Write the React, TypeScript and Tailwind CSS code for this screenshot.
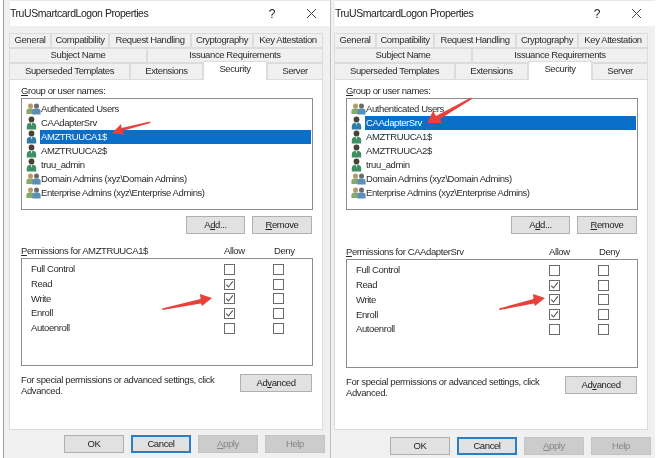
import type { ReactNode } from 'react';

const tabRowOne = [
  ['General', 'w-[42px]'],
  ['Compatibility', 'w-[58px]'],
  ['Request Handling', 'w-[82px]'],
  ['Cryptography', 'w-[62px]'],
  ['Key Attestation', 'w-[70px]'],
];

const tabRowTwo = [
  ['Subject Name', 'w-[138px]'],
  ['Issuance Requirements', 'w-[176px]'],
];

const users = [
  { name: 'Authenticated Users', group: true },
  { name: 'CAAdapterSrv' },
  { name: 'AMZTRUUCA1$' },
  { name: 'AMZTRUUCA2$' },
  { name: 'truu_admin' },
  { name: 'Domain Admins (xyz\\Domain Admins)', group: true },
  { name: 'Enterprise Admins (xyz\\Enterprise Admins)', group: true },
];

const permissions = [
  { name: 'Full Control', allow: false },
  { name: 'Read', allow: true },
  { name: 'Write', allow: true },
  { name: 'Enroll', allow: true },
  { name: 'Autoenroll', allow: false },
];

function Tab({ label, width }: { label: string; width: string }) {
  return (
    <div className={`${width} flex h-full items-center justify-center border border-[#dcdcdc] bg-[#f0f0f0] whitespace-nowrap`}>
      {label}
    </div>
  );
}

function UserIcon({ selected }: { selected: boolean }) {
  const body = selected ? '#2f7ea8' : '#3f8f63';
  return (
    <svg width="11" height="14" viewBox="0 0 11 14" className="shrink-0">
      <circle cx="5.5" cy="3.4" r="2.9" fill="#4a4238" />
      <path d="M0.8 13.5V10c0-2.2 2-3.4 4.7-3.4s4.7 1.2 4.7 3.4v3.5z" fill={body} />
      <path d="M4.6 6.8h1.8l-.9 3z" fill="#dfe8e4" />
    </svg>
  );
}

function GroupIcon() {
  return (
    <svg width="15" height="12" viewBox="0 0 15 12" className="shrink-0">
      <circle cx="4.5" cy="3" r="2.5" fill="#b79a68" />
      <path d="M0.4 11V8c0-1.8 1.8-2.8 4.1-2.8S8.6 6.2 8.6 8v3z" fill="#86a96c" />
      <circle cx="10.5" cy="3" r="2.5" fill="#6f6a66" />
      <path d="M6.4 11.5V8c0-1.8 1.8-2.8 4.1-2.8s4.1 1 4.1 2.8v3.5z" fill="#5b8fb5" />
    </svg>
  );
}

function Check({ checked }: { checked: boolean }) {
  return (
    <div className="flex h-[11px] w-[11px] items-center justify-center border border-[#6b6b6b] bg-white">
      {checked && (
        <svg width="9" height="9" viewBox="0 0 9 9">
          <path d="M1.2 4.6 3.5 7l4.3-5.6" fill="none" stroke="#555555" strokeWidth="1.1" />
        </svg>
      )}
    </div>
  );
}

function Button({ children, width, kind }: { children: ReactNode; width: string; kind?: 'default' | 'disabled' }) {
  const look =
    kind === 'default'
      ? 'border-2 border-[#2a7fc4] bg-[#e1e1e1] text-[#222222]'
      : kind === 'disabled'
        ? 'border border-[#c4c4c4] bg-[#cccccc] text-[#858585]'
        : 'border border-[#b0b0b0] bg-[#e1e1e1] text-[#222222]';
  return <div className={`${width} flex h-[18px] items-center justify-center ${look}`}>{children}</div>;
}

type DialogProps = {
  className: string;
  footerClass: string;
  selected: string;
  permsClass: string;
  rowClass: string;
  gapClass: string;
};

function Dialog({ className, footerClass, selected, permsClass, rowClass, gapClass }: DialogProps) {
  return (
    <div className={`${className} flex h-full flex-col bg-[#f0f0f0]`}>
      <div className="flex h-[26px] shrink-0 items-center border-t border-[#e8e8e8] bg-white pr-[13px] text-[10.5px] tracking-[-0.45px] text-[#222222]">
        <span className="flex-1">TruUSmartcardLogon Properties</span>
        <span className="mr-[31px] text-[12px]">?</span>
        <svg width="11" height="11" viewBox="0 0 11 11">
          <path d="M1 1l9 9M10 1l-9 9" stroke="#444444" strokeWidth="1" />
        </svg>
      </div>

      <div className="-ml-px mt-[7px] w-[314px]">
        <div className="flex h-[15px]">
          {tabRowOne.map(([label, width]) => (
            <Tab key={label} label={label} width={width} />
          ))}
        </div>
        <div className="flex h-[15px]">
          {tabRowTwo.map(([label, width]) => (
            <Tab key={label} label={label} width={width} />
          ))}
        </div>
        <div className="relative z-10 -mb-px flex h-[17px] items-end">
          <Tab label="Superseded Templates" width="w-[121px]" />
          <Tab label="Extensions" width="w-[73px]" />
          <div className="-mt-[2px] flex h-[19px] w-[64px] items-center justify-center border border-b-0 border-[#dcdcdc] bg-white pb-[3px]">
            Security
          </div>
          <Tab label="Server" width="w-[56px]" />
        </div>

        <div className="h-[351px] border border-[#dcdcdc] bg-white pl-[11px] pr-[9px]">
          <div className="pt-[4px] leading-[14px]">
            <u>G</u>roup or user names:
          </div>
          <div className="h-[112px] border border-[#8c8c8c] pt-[3px]">
            {users.map((user) => {
              const isSelected = user.name === selected;
              return (
                <div key={user.name} className="flex h-[14px] items-center pl-[4px]">
                  <div className="flex w-[15px] justify-start">
                    {user.group ? <GroupIcon /> : <UserIcon selected={isSelected} />}
                  </div>
                  <div
                    className={
                      isSelected
                        ? 'ml-[-1px] mr-px flex h-[14px] flex-1 items-center bg-[#0a6fc9] pl-[1px] text-white'
                        : 'pl-0'
                    }
                  >
                    {user.name}
                  </div>
                </div>
              );
            })}
          </div>

          <div className="mt-[6px] flex justify-end gap-[7px] pr-px">
            <Button width="w-[59px]">
              A<u>d</u>d...
            </Button>
            <Button width="w-[60px]">
              <u>R</u>emove
            </Button>
          </div>

          <div className={`${gapClass} flex h-[14px] items-center`}>
            <span className="flex-1">
              <u>P</u>ermissions for {selected}
            </span>
            <span className="w-[50px]">Allow</span>
            <span className="w-[39px]">Deny</span>
          </div>
          <div className={`${permsClass} border border-[#8c8c8c] pt-[3px]`}>
            {permissions.map((perm) => (
              <div key={perm.name} className={`${rowClass} flex items-center pl-[9px]`}>
                <span className="w-[193px]">{perm.name}</span>
                <div className="w-[49px]">
                  <Check checked={perm.allow} />
                </div>
                <Check checked={false} />
              </div>
            ))}
          </div>

          <div className="mt-[8px] flex items-start justify-between pr-px">
            <div className="w-[205px] leading-[11px]">For special permissions or advanced settings, click Advanced.</div>
            <Button width="w-[72px]">
              Ad<u>v</u>anced
            </Button>
          </div>
        </div>
      </div>

      <div className={`${footerClass} flex justify-end gap-[7px]`}>
        <Button width="w-[60px]">OK</Button>
        <Button width="w-[60px]" kind="default">
          Cancel
        </Button>
        <Button width="w-[60px]" kind="disabled">
          <u>A</u>pply
        </Button>
        <Button width="w-[60px]" kind="disabled">
          Help
        </Button>
      </div>
    </div>
  );
}

export default function App() {
  return (
    <div className="relative flex h-[458px] w-[666px] overflow-hidden bg-white font-['Liberation_Sans',Arial,sans-serif] text-[9.5px] tracking-[-0.4px] text-[#2b2b2b] blur-[0.35px]">
      <div className="w-[3px] shrink-0" />
      <Dialog
        className="w-[327px] border-l border-[#8fa3ad] pl-[6px]"
        footerClass="mt-[5px] pr-[5px]"
        selected="AMZTRUUCA1$"
        permsClass="h-[108px]"
        rowClass="h-[14.7px]"
        gapClass="mt-[10px]"
      />
      <Dialog
        className="w-[325px] border-l border-[#b3c4cd] pl-[4px]"
        footerClass="mt-[7px] pr-[4px]"
        selected="CAAdapterSrv"
        permsClass="h-[109px]"
        rowClass="h-[14.8px]"
        gapClass="mt-[11px]"
      />
      {/* red annotation arrows drawn over the two dialogs */}
      <svg className="absolute inset-0" width="666" height="458" viewBox="0 0 666 458" fill="#e8413c">
        <polygon points="150,121.5 150.5,123 122,131 125,135 112,133 121,124 121.5,128" />
        <polygon points="162,308.5 162.5,310 201,303.5 202,306 212,298 200,294 200.5,299" />
        <polygon points="471,97.5 472,99 440,119 442,123 427,123 433,111 436,116" />
        <polygon points="499,308.5 499.5,310 534,303.5 535,306 545,298 533,294 533.5,299" />
      </svg>
    </div>
  );
}
